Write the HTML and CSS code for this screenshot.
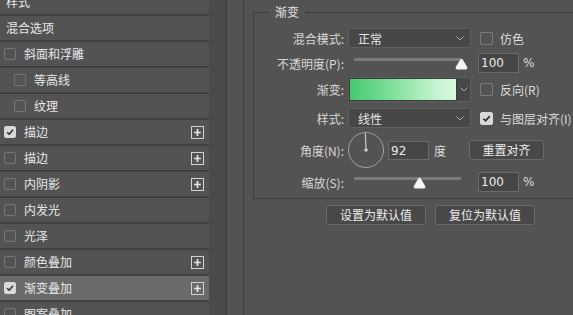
FILE: index.html
```html
<!DOCTYPE html>
<html lang="zh-CN">
<head>
<meta charset="utf-8">
<title>图层样式 - 渐变叠加</title>
<link rel="stylesheet" href="styles.css">
</head>
<body>
<div class="app">
  <aside class="layers">
    <div class="row head">样式</div>
    <div class="row head">混合选项</div>
    <div class="row"><span class="cb"></span>斜面和浮雕</div>
    <div class="row sub"><span class="cb"></span>等高线</div>
    <div class="row sub"><span class="cb"></span>纹理</div>
    <div class="row"><span class="cb on"><svg viewBox="0 0 12 12"><path d="M2.6 6.2 L5 8.6 L9.6 3.4" fill="none" stroke="#2e2e2e" stroke-width="1.8"/></svg></span>描边<span class="plus"><svg viewBox="0 0 13 13"><path d="M6.5 2.5 V10.5 M2.5 6.5 H10.5" stroke="#e6e6e6" stroke-width="2"/></svg></span></div>
    <div class="row"><span class="cb"></span>描边<span class="plus"><svg viewBox="0 0 13 13"><path d="M6.5 2.5 V10.5 M2.5 6.5 H10.5" stroke="#e6e6e6" stroke-width="2"/></svg></span></div>
    <div class="row"><span class="cb"></span>内阴影<span class="plus"><svg viewBox="0 0 13 13"><path d="M6.5 2.5 V10.5 M2.5 6.5 H10.5" stroke="#e6e6e6" stroke-width="2"/></svg></span></div>
    <div class="row"><span class="cb"></span>内发光</div>
    <div class="row"><span class="cb"></span>光泽</div>
    <div class="row"><span class="cb"></span>颜色叠加<span class="plus"><svg viewBox="0 0 13 13"><path d="M6.5 2.5 V10.5 M2.5 6.5 H10.5" stroke="#e6e6e6" stroke-width="2"/></svg></span></div>
    <div class="row active"><span class="cb on"><svg viewBox="0 0 12 12"><path d="M2.6 6.2 L5 8.6 L9.6 3.4" fill="none" stroke="#2e2e2e" stroke-width="1.8"/></svg></span>渐变叠加<span class="plus"><svg viewBox="0 0 13 13"><path d="M6.5 2.5 V10.5 M2.5 6.5 H10.5" stroke="#e6e6e6" stroke-width="2"/></svg></span></div>
    <div class="row"><span class="cb"></span>图案叠加</div>
  </aside>
  <div class="gutter"></div>
  <div class="gutter2"></div>
  <main class="panel">
    <fieldset class="group">
      <legend>渐变</legend>
      <div class="frow r1">
        <label class="flabel">混合模式:</label>
        <div class="select"><span>正常</span><svg class="chev" viewBox="0 0 8 5"><path d="M0.5 0.5 L4 4 L7.5 0.5" fill="none" stroke="#a8a8a8" stroke-width="1"/></svg></div>
        <span class="opt"><span class="cb"></span>仿色</span>
      </div>
      <div class="frow r2">
        <label class="flabel">不透明度(P):</label>
        <div class="slider"><div class="track"></div><svg class="thumb" style="left:107px" viewBox="0 0 13 12"><path d="M6.5 0.8 Q7.3 0.8 8 2 L12.2 9 Q12.8 11.5 10.5 11.5 H2.5 Q0.2 11.5 0.8 9 L5 2 Q5.7 0.8 6.5 0.8 Z" fill="#f4f4f4"/></svg></div>
        <div class="num">100</div>
        <span class="unit">%</span>
      </div>
      <div class="frow r3">
        <label class="flabel">渐变:</label>
        <div class="gradpick"><div class="swatch"></div><div class="drop"><svg class="chev" viewBox="0 0 8 5"><path d="M0.5 0.5 L4 4 L7.5 0.5" fill="none" stroke="#a8a8a8" stroke-width="1"/></svg></div></div>
        <span class="opt"><span class="cb"></span>反向(R)</span>
      </div>
      <div class="frow r4">
        <label class="flabel">样式:</label>
        <div class="select"><span>线性</span><svg class="chev" viewBox="0 0 8 5"><path d="M0.5 0.5 L4 4 L7.5 0.5" fill="none" stroke="#a8a8a8" stroke-width="1"/></svg></div>
        <span class="opt"><span class="cb on"><svg viewBox="0 0 12 12"><path d="M2.6 6.2 L5 8.6 L9.6 3.4" fill="none" stroke="#2e2e2e" stroke-width="1.8"/></svg></span>与图层对齐(I)</span>
      </div>
      <div class="frow r5">
        <label class="flabel">角度(N):</label>
        <svg class="dial" viewBox="0 0 36 36"><circle cx="18" cy="18" r="17.5" fill="none" stroke="#a2a2a2" stroke-width="1"/><line x1="18" y1="18" x2="17.4" y2="1.5" stroke="#c8c8c8" stroke-width="1.2"/><circle cx="18" cy="18" r="1.8" fill="#c8c8c8"/></svg>
        <div class="num angle">92</div>
        <span class="deg">度</span>
        <button class="btn reset">重置对齐</button>
      </div>
      <div class="frow r6">
        <label class="flabel">缩放(S):</label>
        <div class="slider"><div class="track"></div><svg class="thumb" style="left:65px" viewBox="0 0 13 12"><path d="M6.5 0.8 Q7.3 0.8 8 2 L12.2 9 Q12.8 11.5 10.5 11.5 H2.5 Q0.2 11.5 0.8 9 L5 2 Q5.7 0.8 6.5 0.8 Z" fill="#f4f4f4"/></svg></div>
        <div class="num">100</div>
        <span class="unit">%</span>
      </div>
    </fieldset>
    <div class="defaults">
      <button class="btn wide">设置为默认值</button>
      <button class="btn wide">复位为默认值</button>
    </div>
  </main>
</div>
</body>
</html>
```
FILE: styles.css
```css
* { box-sizing: border-box; }
html, body { margin: 0; padding: 0; }
body {
  width: 573px;
  height: 315px;
  overflow: hidden;
  background: #535353;
  color: #dedede;
  font-family: "Noto Sans CJK SC", "Noto Sans", sans-serif;
  font-size: 12px;
}
.app { display: flex; height: 315px; }

/* left list */
.layers {
  width: 209px;
  flex: none;
  margin-top: -10px;
  background: #535353;
}
.row {
  height: 26px;
  border-bottom: 2px solid #424242;
  display: flex;
  align-items: center;
  padding: 0 5px 0 4px;
  color: #e8e8e8;
  line-height: 14px;
}
.row.head { padding-left: 6px; }
.row.sub { padding-left: 14px; }
.row.active { background: #6a6a6a; }
.cb {
  width: 12px;
  height: 12px;
  flex: none;
  border: 1px solid #767676;
  border-radius: 2px;
  margin-right: 8px;
  display: inline-flex;
}
.cb.on { background: #d8d8d8; border-color: #d8d8d8; }
.cb svg { width: 10px; height: 10px; }
.plus {
  margin-left: auto;
  width: 13px;
  height: 13px;
  border: 1px solid #d2d2d2;
  display: inline-flex;
}
.plus svg { width: 11px; height: 11px; }

.gutter { width: 18px; flex: none; background: #4a4a4a; border-right: 1px solid #3b3b3b; }
.gutter2 { width: 17px; flex: none; background: #535353; border-right: 1px solid #3e3e3e; }

/* right panel */
.panel { flex: 1; overflow: hidden; padding-top: 4px; }
.group {
  margin: 0 0 0 9px;
  width: 360px;
  padding: 8px 0 6px 0;
  border: 1px solid #3e3e3e;
  min-width: 0;
}
.group legend {
  margin-left: 15px;
  padding: 0 6px;
  line-height: 16px;
  font-size: 12px;
  color: #e2e2e2;
}
.frow { display: flex; align-items: center; height: 20px; }
.r2 { margin-top: 5px; }
.r3 { margin-top: 4px; height: 25px; }
.r4 { margin-top: 6px; }
.r5 { margin-top: 4px; height: 36px; }
.r6 { margin-top: 4px; }
.flabel {
  width: 90px;
  flex: none;
  text-align: right;
  margin-right: 4px;
  color: #d8d8d8;
  white-space: nowrap;
}
.select {
  width: 123px;
  height: 20px;
  flex: none;
  border: 1px solid #5e5e5e;
  border-radius: 3px;
  background: #474747;
  display: flex;
  align-items: center;
  padding: 0 6px 0 9px;
  color: #e8e8e8;
}
.select span { flex: 1; }
.chev { width: 8px; height: 5px; }
.opt { display: inline-flex; align-items: center; margin-left: 9px; white-space: nowrap; color: #dcdcdc; }
.opt .cb { width: 13px; height: 13px; margin-right: 7px; border-color: #7a7a7a; }
.opt .cb.on { border-color: #d8d8d8; }
.opt .cb svg { width: 11px; height: 11px; }

.slider {
  position: relative;
  width: 123px;
  height: 20px;
  flex: none;
  padding: 5px 0 0 6px;
}
.track { width: 107px; height: 3px; background: #7a7a7a; }
.thumb { position: absolute; top: 5px; width: 13px; height: 12px; }
.num {
  width: 41px;
  height: 20px;
  flex: none;
  margin-left: 7px;
  background: #464646;
  border: 1px solid #6a6a6a;
  padding-left: 2px;
  font-family: "DejaVu Sans", "Liberation Sans", sans-serif;
  font-size: 12px;
  line-height: 18px;
  color: #eaeaea;
}
.unit { margin-left: 4px; color: #dcdcdc; font-family: "DejaVu Sans", sans-serif; }

.gradpick {
  width: 123px;
  height: 25px;
  flex: none;
  display: flex;
  border: 1px solid #5e5e5e;
  border-radius: 2px;
  background: #474747;
}
.swatch {
  width: 108px;
  height: 100%;
  border: 1px solid #3a3a3a;
  background: linear-gradient(to right, #46c96f 0%, #7fdf9a 40%, #c2f3d0 80%, #d6fadf 100%);
}
.drop { flex: 1; display: flex; align-items: center; justify-content: center; }

.dial { width: 36px; height: 36px; flex: none; }
.num.angle { margin-left: 4px; height: 19px; }
.deg { margin-left: 5px; color: #dcdcdc; }
.btn {
  height: 20px;
  border: 1px solid #6a6a6a;
  border-radius: 3px;
  background: #484848;
  color: #ececec;
  font-family: "Noto Sans CJK SC", sans-serif;
  font-size: 12px;
  padding: 0;
  line-height: 18px;
}
.reset { width: 75px; margin-left: 23px; }
.defaults { display: flex; gap: 9px; margin: 6px 0 0 82px; }
.btn.wide { width: 100px; }
```
